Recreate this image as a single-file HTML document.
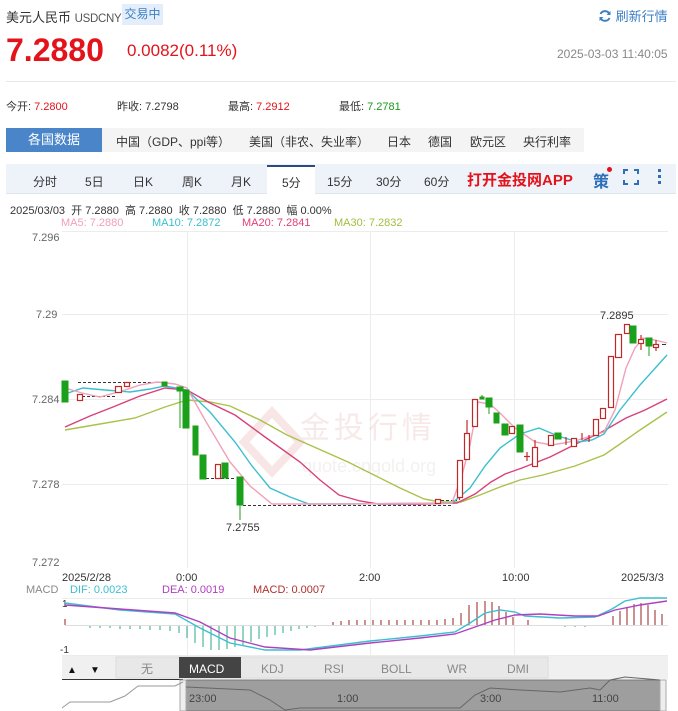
<!DOCTYPE html>
<html><head><meta charset="utf-8"><style>
*{margin:0;padding:0;box-sizing:border-box}
body{width:678px;height:711px;overflow:hidden;background:#fff;font-family:"Liberation Sans","Noto Sans CJK SC",sans-serif;color:#333;position:relative}
.a{position:absolute;white-space:nowrap}
</style></head><body>
<div class="a" style="left:6px;top:7px;font-size:13px;color:#333">美元人民币 <span style="font-size:11.5px;color:#555;letter-spacing:-0.3px">USDCNY</span></div>
<div class="a" style="left:122px;top:4px;width:41px;height:21px;background:#e3eefa;color:#3d7fc4;font-size:12px;line-height:21px;text-align:center">交易中</div>
<div class="a" style="left:598px;top:6px;font-size:13px;color:#3d7fc4"><svg width="14" height="14" viewBox="0 0 14 14" style="vertical-align:-2px"><path d="M11.5 5A5 5 0 0 0 2.5 5M2.5 9A5 5 0 0 0 11.5 9" fill="none" stroke="#3d7fc4" stroke-width="2"/><path d="M12.5 2v4h-4zM1.5 12V8h4z" fill="#3d7fc4"/></svg> 刷新行情</div>
<div class="a" style="left:6px;top:32px;font-size:32px;font-weight:bold;color:#e3131b">7.2880</div>
<div class="a" style="left:127px;top:41px;font-size:17px;color:#e3131b">0.0082(0.11%)</div>
<div class="a" style="left:557px;top:47px;font-size:12px;color:#888">2025-03-03 11:40:05</div>
<div class="a" style="left:6px;top:81px;width:670px;height:1px;background:#e8e8e8"></div>
<div class="a" style="left:6px;top:98px;font-size:11px;color:#333">今开: <span style="color:#e3131b">7.2800</span></div>
<div class="a" style="left:117px;top:98px;font-size:11px;color:#333">昨收: 7.2798</div>
<div class="a" style="left:228px;top:98px;font-size:11px;color:#333">最高: <span style="color:#e3131b">7.2912</span></div>
<div class="a" style="left:339px;top:98px;font-size:11px;color:#333">最低: <span style="color:#1a9a1a">7.2781</span></div>
<div class="a" style="left:6px;top:128px;width:96px;height:24px;background:#4a85c9;color:#fff;font-size:13px;line-height:24px;text-align:center">各国数据</div>
<div class="a" style="left:102px;top:128px;width:482px;height:24px;background:#f4f4f4"></div>
<div class="a" style="left:116px;top:133px;font-size:12px;color:#333">中国（GDP、ppi等）</div>
<div class="a" style="left:249px;top:133px;font-size:12px;color:#333">美国（非农、失业率）</div>
<div class="a" style="left:387px;top:133px;font-size:12px;color:#333">日本</div>
<div class="a" style="left:428px;top:133px;font-size:12px;color:#333">德国</div>
<div class="a" style="left:470px;top:133px;font-size:12px;color:#333">欧元区</div>
<div class="a" style="left:523px;top:133px;font-size:12px;color:#333">央行利率</div>
<div class="a" style="left:6px;top:164px;width:670px;height:30px;background:#eef3fa;border-bottom:1px solid #dfe6ef"></div>
<div class="a" style="left:267px;top:165px;width:48px;height:30px;background:#fff;border-top:2px solid #2a4a80"></div>
<div class="a" style="left:33px;top:173px;font-size:12px">分时</div>
<div class="a" style="left:85px;top:173px;font-size:12px">5日</div>
<div class="a" style="left:133px;top:173px;font-size:12px">日K</div>
<div class="a" style="left:182px;top:173px;font-size:12px">周K</div>
<div class="a" style="left:231px;top:173px;font-size:12px">月K</div>
<div class="a" style="left:282px;top:174px;font-size:12px">5分</div>
<div class="a" style="left:327px;top:173px;font-size:12px">15分</div>
<div class="a" style="left:376px;top:173px;font-size:12px">30分</div>
<div class="a" style="left:424px;top:173px;font-size:12px">60分</div>
<div class="a" style="left:467px;top:169px;font-size:15px;font-weight:bold;color:#e3131b">打开金投网APP</div>
<div class="a" style="left:593px;top:168px;font-size:16px;font-weight:bold;color:#2e6fb8">策</div>
<div class="a" style="left:607px;top:167px;width:5px;height:5px;border-radius:50%;background:#e3131b"></div>
<svg class="a" style="left:623px;top:169px" width="16" height="16"><path d="M1 5V1h4M11 1h4v4M15 11v4h-4M5 15H1v-4" fill="none" stroke="#2e6fb8" stroke-width="2"/></svg>
<div class="a" style="left:658px;top:169px;width:3px;height:3px;background:#2e6fb8;box-shadow:0 6px #2e6fb8,0 12px #2e6fb8"></div>
<div class="a" style="left:10px;top:202px;font-size:11px;color:#333">2025/03/03&nbsp; 开 7.2880&nbsp; 高 7.2880&nbsp; 收 7.2880&nbsp; 低 7.2880&nbsp; 幅 0.00%</div>
<div class="a" style="left:61px;top:217px;font-size:11px;color:#f0a0b8">MA5: 7.2880</div>
<div class="a" style="left:152px;top:217px;font-size:11px;color:#3bbfcf">MA10: 7.2872</div>
<div class="a" style="left:242px;top:217px;font-size:11px;color:#e0407a">MA20: 7.2841</div>
<div class="a" style="left:334px;top:217px;font-size:11px;color:#a0c040">MA30: 7.2832</div>
<svg class="a" style="left:0;top:0" width="678" height="711">
<g stroke="#ececec" stroke-width="1">
<line x1="62" y1="231.5" x2="668" y2="231.5"/><line x1="62" y1="314.5" x2="668" y2="314.5"/><line x1="62" y1="399.5" x2="668" y2="399.5"/><line x1="62" y1="484.5" x2="668" y2="484.5"/>
<line x1="187.5" y1="231" x2="187.5" y2="568"/><line x1="370.5" y1="231" x2="370.5" y2="568"/><line x1="514.5" y1="231" x2="514.5" y2="568"/>
<line x1="187.5" y1="598" x2="187.5" y2="655"/><line x1="370.5" y1="598" x2="370.5" y2="655"/><line x1="514.5" y1="598" x2="514.5" y2="655"/>
<line x1="62" y1="598.5" x2="668" y2="598.5"/><line x1="62" y1="655.5" x2="668" y2="655.5"/>
</g>
<g fill="#666" font-size="11" font-family="Liberation Sans,sans-serif">
<text x="32" y="241">7.296</text><text x="36" y="318">7.29</text><text x="32" y="403">7.284</text><text x="32" y="488">7.278</text><text x="32" y="566">7.272</text>
</g>
<g opacity="0.45">
<path d="M272 412l28 30-28 30-28-30z" fill="none" stroke="#f0c8c8" stroke-width="8"/>
<text x="300" y="438" font-size="30" fill="#f0d0d0" font-family="Noto Sans CJK SC,sans-serif" letter-spacing="4">金投行情</text>
<text x="302" y="472" font-size="18" fill="#e8e0e0" font-family="Liberation Sans,sans-serif">quote.cngold.org</text>
</g>
<g stroke="#333" stroke-dasharray="3,2" stroke-width="1"><line x1="78" y1="382.5" x2="165" y2="382.5"/><line x1="206" y1="478.5" x2="236" y2="478.5"/><line x1="243" y1="505.5" x2="452" y2="505.5"/><line x1="82" y1="396.5" x2="115" y2="396.5"/><line x1="441" y1="500.5" x2="457" y2="500.5"/></g>
<g fill="none" stroke-width="1.4">
<polyline stroke="#a8c24a" points="65,430 100,424 135,418 165,407 187,400 210,402 230,406 260,420 287,435 348,462 400,488 424,499 440,502 461,502 480,495 500,487 520,480 543,475 575,466 604,455 620,444 640,430 667,412"/>
<polyline stroke="#d9407a" points="65,427 90,416 113,407 140,396 165,388 187,390 210,403 235,415 265,437 300,462 320,480 339,495 360,501 378,504 420,504 457,503 475,494 491,482 505,474 522,468 550,457 578,443 600,433 626,418 645,410 667,399"/>
<polyline stroke="#3bbfcf" points="65,394 83,388 105,390 130,392 150,389 165,386 187,390 210,412 235,442 252,466 270,488 290,497 309,504 350,504 452,503 470,488 485,466 500,448 520,434 539,428 558,436 578,442 592,440 604,434 620,410 640,385 667,355"/>
<polyline stroke="#f0a0b8" points="65,388 82,393 100,397 125,390 140,385 157,382 175,384 187,388 205,420 230,462 250,486 272,504 330,504 452,503 462,475 470,445 478,402 490,404 500,413 515,428 535,442 552,445 575,441 604,432 615,410 626,368 635,348 643,338 655,340 667,343"/>
</g>
<g stroke="#c0282a" fill="#fff" stroke-width="1.2">
<rect x="77.5" y="394.5" width="5" height="6"/><rect x="115.5" y="386.5" width="6" height="6"/><rect x="124.5" y="382.5" width="5" height="4"/>
<rect x="215.5" y="464.5" width="5" height="14"/><rect x="435.5" y="499.5" width="5" height="4"/>
<line x1="459.5" y1="460" x2="459.5" y2="500"/><rect x="457.5" y="460.5" width="5" height="37"/>
<line x1="467" y1="420" x2="467" y2="433"/><rect x="464.5" y="433.5" width="5" height="26"/>
<rect x="472.5" y="399.5" width="5" height="27"/><rect x="509.5" y="426.5" width="5" height="7"/>
<line x1="524" y1="456.5" x2="530" y2="456.5"/><line x1="527" y1="452" x2="527" y2="461"/>
<line x1="535" y1="440" x2="535" y2="447"/><rect x="532.5" y="447.5" width="5" height="19"/>
<rect x="548.5" y="435.5" width="5" height="10"/><rect x="571.5" y="438.5" width="5" height="8"/>
<line x1="566" y1="437" x2="566" y2="445"/><line x1="582" y1="433" x2="582" y2="440"/><line x1="589" y1="435" x2="589" y2="442"/>
<rect x="593.5" y="419.5" width="5" height="16"/><rect x="600.5" y="408.5" width="5" height="10"/>
<rect x="608.5" y="356.5" width="5" height="51"/><rect x="615.5" y="334.5" width="6" height="23"/>
<rect x="624.5" y="324.5" width="5" height="9"/><line x1="641" y1="335" x2="641" y2="350"/><rect x="638.5" y="339.5" width="5" height="4"/>
<line x1="656" y1="340" x2="656" y2="351"/><rect x="653.5" y="344.5" width="5" height="3"/>
</g>
<g fill="#1aa01a" stroke="#1aa01a">
<rect x="62" y="381" width="6" height="21"/><rect x="162" y="382" width="5" height="4"/>
<line x1="180" y1="387" x2="180" y2="428"/><rect x="177" y="387" width="6" height="4"/>
<rect x="183" y="390" width="6" height="38"/><rect x="193" y="426" width="5" height="29"/><rect x="200" y="455" width="6" height="24"/>
<rect x="222" y="463" width="6" height="15"/><line x1="240" y1="505" x2="240" y2="520"/><rect x="237" y="477" width="6" height="28"/>
<rect x="480" y="397" width="4" height="2"/><line x1="482" y1="395" x2="482" y2="399"/>
<line x1="489" y1="407" x2="489" y2="414"/><rect x="486" y="398" width="6" height="9"/><rect x="494" y="413" width="5" height="10"/>
<rect x="502" y="424" width="6" height="11"/><rect x="517" y="425" width="6" height="27"/><rect x="555" y="433" width="6" height="6"/>
<rect x="630" y="326" width="6" height="17"/><line x1="649" y1="346" x2="649" y2="356"/><rect x="646" y="338" width="6" height="8"/>
</g>
<line x1="662" y1="344.5" x2="666" y2="344.5" stroke="#333"/>
<g fill="#333" font-size="11" font-family="Liberation Sans,sans-serif">
<text x="226" y="531">7.2755</text><text x="600" y="319">7.2895</text>
<text x="62" y="581">2025/2/28</text><text x="176" y="581">0:00</text><text x="359" y="581">2:00</text><text x="502" y="581">10:00</text><text x="621" y="581">2025/3/3</text>
</g>
<text x="26" y="593" font-size="11" fill="#888" font-family="Liberation Sans,sans-serif">MACD</text>
<text x="70" y="593" font-size="11" fill="#3bbfcf" font-family="Liberation Sans,sans-serif">DIF: 0.0023</text>
<text x="162" y="593" font-size="11" fill="#b040c0" font-family="Liberation Sans,sans-serif">DEA: 0.0019</text>
<text x="253" y="593" font-size="11" fill="#b03030" font-family="Liberation Sans,sans-serif">MACD: 0.0007</text>
<text x="62" y="607" font-size="10" fill="#333">1</text><text x="60" y="653" font-size="10" fill="#333">-1</text>
<g stroke-width="1">
<g stroke="#9a2020">
<line x1="65" y1="619" x2="65" y2="625"/><line x1="333" y1="622" x2="333" y2="625"/><line x1="341" y1="621" x2="341" y2="625"/><line x1="349" y1="620" x2="349" y2="625"/><line x1="357" y1="620" x2="357" y2="625"/><line x1="365" y1="620" x2="365" y2="625"/><line x1="373" y1="620" x2="373" y2="625"/><line x1="381" y1="620" x2="381" y2="625"/><line x1="389" y1="620" x2="389" y2="625"/><line x1="397" y1="620" x2="397" y2="625"/><line x1="405" y1="620" x2="405" y2="625"/><line x1="413" y1="620" x2="413" y2="625"/><line x1="421" y1="620" x2="421" y2="625"/><line x1="429" y1="620" x2="429" y2="625"/><line x1="437" y1="620" x2="437" y2="625"/><line x1="445" y1="619" x2="445" y2="625"/><line x1="453" y1="618" x2="453" y2="625"/><line x1="461" y1="613" x2="461" y2="625"/><line x1="469" y1="605" x2="469" y2="625"/><line x1="477" y1="602" x2="477" y2="625"/><line x1="485" y1="601" x2="485" y2="625"/><line x1="492" y1="602" x2="492" y2="625"/><line x1="499" y1="606" x2="499" y2="625"/><line x1="506" y1="612" x2="506" y2="625"/><line x1="513" y1="617" x2="513" y2="625"/><line x1="528" y1="620" x2="528" y2="625"/>
<line x1="613" y1="616" x2="613" y2="625"/><line x1="620" y1="611" x2="620" y2="625"/><line x1="627" y1="607" x2="627" y2="625"/><line x1="634" y1="604" x2="634" y2="625"/><line x1="641" y1="603" x2="641" y2="625"/><line x1="648" y1="605" x2="648" y2="625"/><line x1="655" y1="610" x2="655" y2="625"/><line x1="662" y1="614" x2="662" y2="625"/>
</g>
<g stroke="#2aaa8a">
<line x1="90" y1="625" x2="90" y2="628"/><line x1="100" y1="625" x2="100" y2="628"/><line x1="110" y1="625" x2="110" y2="628"/><line x1="120" y1="625" x2="120" y2="629"/><line x1="130" y1="625" x2="130" y2="629"/><line x1="140" y1="625" x2="140" y2="629"/><line x1="150" y1="625" x2="150" y2="630"/><line x1="160" y1="625" x2="160" y2="630"/><line x1="170" y1="625" x2="170" y2="631"/><line x1="179" y1="625" x2="179" y2="633"/><line x1="187" y1="625" x2="187" y2="638"/><line x1="195" y1="625" x2="195" y2="643"/><line x1="203" y1="625" x2="203" y2="647"/><line x1="211" y1="625" x2="211" y2="650"/><line x1="219" y1="625" x2="219" y2="650"/><line x1="227" y1="625" x2="227" y2="649"/><line x1="235" y1="625" x2="235" y2="647"/><line x1="243" y1="625" x2="243" y2="645"/><line x1="251" y1="625" x2="251" y2="642"/><line x1="259" y1="625" x2="259" y2="639"/><line x1="267" y1="625" x2="267" y2="637"/><line x1="275" y1="625" x2="275" y2="635"/><line x1="283" y1="625" x2="283" y2="633"/><line x1="291" y1="625" x2="291" y2="631"/><line x1="299" y1="625" x2="299" y2="629"/><line x1="307" y1="625" x2="307" y2="628"/><line x1="315" y1="625" x2="315" y2="627"/>
<line x1="565" y1="625" x2="565" y2="627"/><line x1="575" y1="625" x2="575" y2="627"/><line x1="585" y1="625" x2="585" y2="627"/>
</g>
<line x1="65" y1="625.5" x2="668" y2="625.5" stroke="#ddd"/>
</g>
<polyline fill="none" stroke="#3bbfcf" stroke-width="1.4" points="65,603 120,610 175,614 200,628 230,643 265,650 300,650 370,641 420,636 455,632 470,623 485,613 500,610 515,612 525,616 560,618 595,617 612,609 625,601 640,598 667,598"/>
<polyline fill="none" stroke="#b040c0" stroke-width="1.4" points="65,605 120,609 175,613 200,622 230,638 265,647 310,650 370,643 420,638 455,634 475,627 495,620 515,615 540,614 575,616 598,616 615,610 640,605 667,601"/>
<rect x="62" y="656" width="606" height="23" fill="#f0f0f0"/>
<rect x="116" y="657" width="432" height="21" fill="#e8e8e8" stroke="#ddd"/>
<rect x="179" y="657" width="62" height="21" fill="#444"/>
<g font-size="12" font-family="Liberation Sans,Noto Sans CJK SC,sans-serif" fill="#888">
<text x="67" y="673" fill="#111" font-size="10">▲</text><text x="90" y="673" fill="#111" font-size="10">▼</text>
<text x="141" y="673">无</text><text x="189" y="673" fill="#fff">MACD</text><text x="261" y="673">KDJ</text><text x="324" y="673">RSI</text><text x="381" y="673">BOLL</text><text x="447" y="673">WR</text><text x="507" y="673">DMI</text>
</g>
<line x1="62" y1="680" x2="183" y2="680" stroke="#333" stroke-width="2"/>
<rect x="62" y="680" width="606" height="31" fill="#fff"/>
<rect x="183" y="680" width="480" height="31" fill="#9e9e9e" stroke="#777"/>
<rect x="180" y="680" width="6" height="31" fill="#eee" stroke="#aaa"/><rect x="660" y="680" width="6" height="31" fill="#eee" stroke="#aaa"/>
<polyline fill="none" stroke="#999" points="62,708 70,702 110,702 125,696 138,686 175,686 183,682"/>
<polyline fill="none" stroke="#666" points="186,687 250,690 270,700 285,710 300,708 460,708 475,695 490,688 520,690 560,692 590,688 600,690 610,680 625,677 660,680"/>
<g font-size="11" fill="#444" font-family="Liberation Sans,sans-serif"><text x="189" y="702">23:00</text><text x="337" y="702">1:00</text><text x="480" y="702">3:00</text><text x="592" y="702">11:00</text></g>
</svg>
</body></html>
